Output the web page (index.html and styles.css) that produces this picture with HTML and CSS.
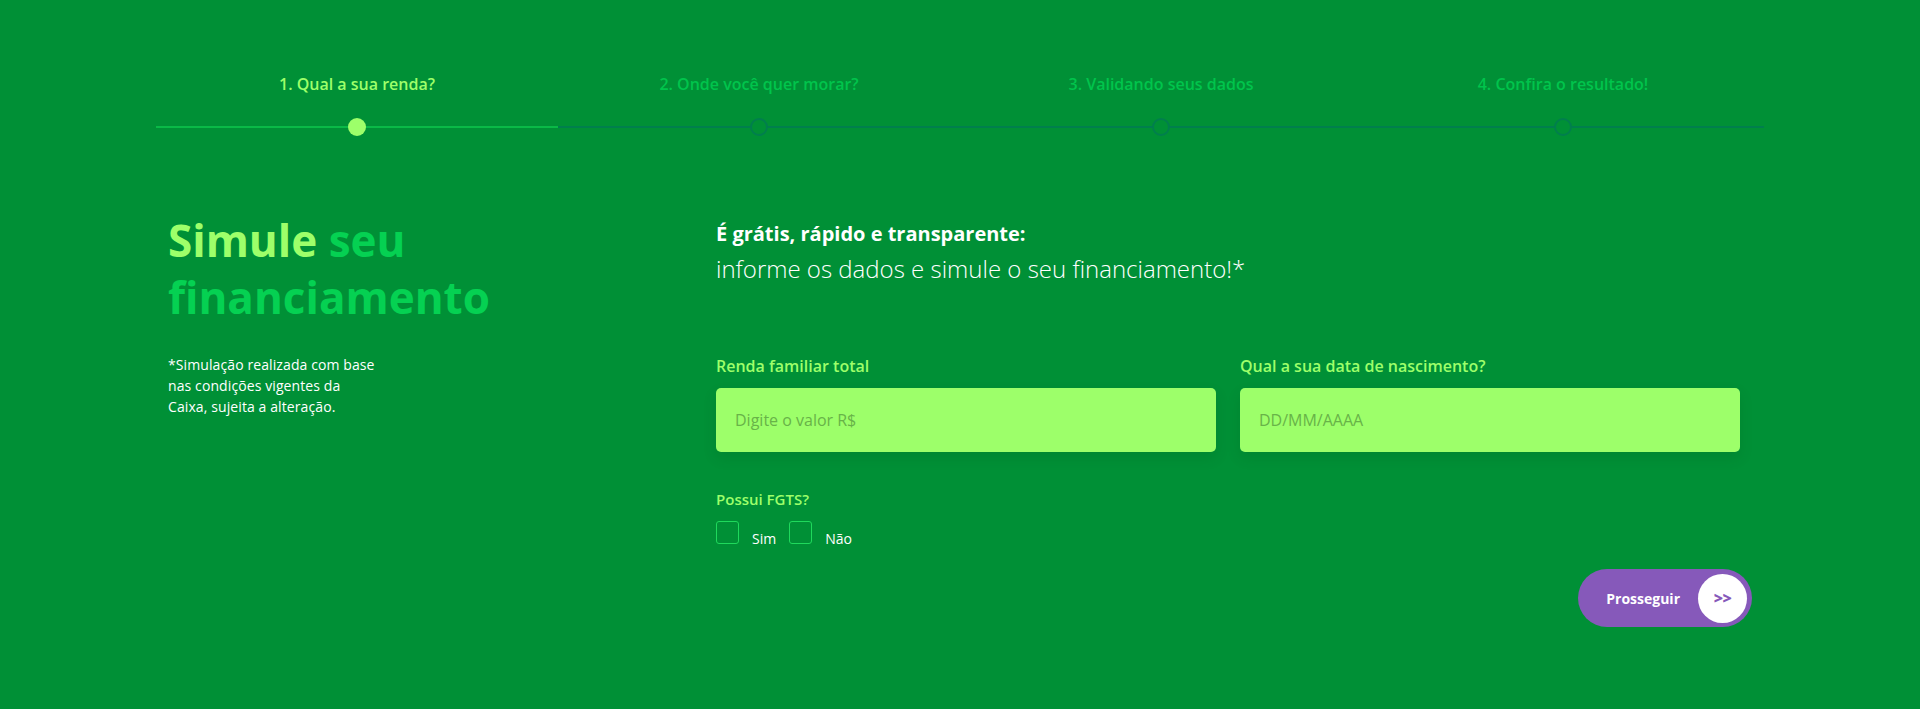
FILE: index.html
```html
<!DOCTYPE html>
<html lang="pt-BR">
<head>
    <meta charset="UTF-8">
    <meta name="viewport" content="width=device-width, initial-scale=1.0">
    <title>Simule seu financiamento</title>
    <link rel="stylesheet" href="styles.css">
</head>
<body>

    <div class="page">
        <ol class="steps">
            <li class="step active">
                <span class="step-title">1. Qual a sua renda?</span>
                <span class="step-track"><span class="step-dot"></span></span>
            </li>
            <li class="step">
                <span class="step-title">2. Onde você quer morar?</span>
                <span class="step-track"><span class="step-dot"></span></span>
            </li>
            <li class="step">
                <span class="step-title">3. Validando seus dados</span>
                <span class="step-track"><span class="step-dot"></span></span>
            </li>
            <li class="step">
                <span class="step-title">4. Confira o resultado!</span>
                <span class="step-track"><span class="step-dot"></span></span>
            </li>
        </ol>

        <main class="simulator">
            <section class="intro">
                <h1 class="title"><span class="title-hl">Simule</span> seu<br>financiamento</h1>
                <p class="note">*Simulação realizada com base<br>nas condições vigentes da<br>Caixa, sujeita a alteração.</p>
            </section>

            <form class="form" onsubmit="return false">
                <div class="lead">É grátis, rápido e transparente:</div>
                <div class="lead-sub">informe os dados e simule o seu financiamento!*</div>

                <div class="fields">
                    <label class="field">
                        <span class="field-label">Renda familiar total</span>
                        <input class="field-input" type="text" placeholder="Digite o valor R$">
                    </label>
                    <label class="field">
                        <span class="field-label">Qual a sua data de nascimento?</span>
                        <input class="field-input" type="text" placeholder="DD/MM/AAAA">
                    </label>
                </div>

                <div class="fgts">
                    <div class="fgts-label">Possui FGTS?</div>
                    <div class="fgts-options">
                        <label class="option"><input class="option-box" type="checkbox" name="fgts"><span>Sim</span></label>
                        <label class="option"><input class="option-box" type="checkbox" name="fgts"><span>Não</span></label>
                    </div>
                </div>

                <div class="actions">
                    <button class="btn-next" type="submit">Prosseguir <span class="btn-arrow">&gt;&gt;</span></button>
                </div>
            </form>
        </main>
    </div>

</body>
</html>
```

FILE: styles.css
```css
* {
    box-sizing: border-box;
}

body {
    margin: 0;
    background-color: #009036;
    font-family: "Open Sans", "Noto Sans", sans-serif;
    color: #fff;
}

.page {
    width: 1608px;
    margin: 0 auto;
    padding-top: 74px;
}

/* steps bar */
.steps {
    display: flex;
    list-style: none;
    margin: 0;
    padding: 0;
}

.step {
    flex: 1;
    display: flex;
    flex-direction: column;
    align-items: center;
    gap: 24px;
}

.step-title {
    font-size: 16px;
    line-height: 20px;
    font-weight: 600;
    color: #00c44c;
}

.step-track {
    width: 100%;
    height: 18px;
    display: flex;
    justify-content: center;
    background: linear-gradient(#007f4d, #007f4d) center / 100% 2px no-repeat;
}

.step-dot {
    width: 18px;
    height: 18px;
    border-radius: 50%;
    border: 2px solid #007f4d;
    background-color: #009036;
}

.step.active .step-title {
    color: #9dff6a;
}

.step.active .step-track {
    background-image: linear-gradient(#0ab947, #0ab947);
}

.step.active .step-dot {
    border: none;
    background-color: #9dff6a;
}

/* content */
.simulator {
    display: flex;
    margin-top: 76px;
    padding: 0 12px;
}

.intro {
    width: 548px;
}

.title {
    margin: 0;
    font-size: 44px;
    line-height: 57px;
    font-weight: 700;
    color: #05d152;
}

.title-hl {
    color: #9dff6a;
}

.note {
    margin: 28px 0 0;
    font-size: 14px;
    line-height: 21px;
    letter-spacing: 0.1px;
}

.form {
    flex: 1;
    padding-top: 8px;
}

.lead {
    font-size: 20px;
    line-height: 28px;
    font-weight: 700;
}

.lead-sub {
    margin-top: 5px;
    font-size: 24px;
    line-height: 32px;
    font-weight: 300;
}

.fields {
    display: grid;
    grid-template-columns: 500px 500px;
    gap: 24px;
    margin-top: 71px;
}

.field {
    display: flex;
    flex-direction: column;
    gap: 12px;
}

.field-label,
.fgts-label {
    font-size: 16px;
    line-height: 20px;
    font-weight: 600;
    color: #9dff6a;
}

.field-input {
    height: 64px;
    padding: 0 19px;
    border: none;
    border-radius: 5px;
    background-color: #9dff6a;
    box-shadow: 0 6px 14px rgba(0, 60, 20, 0.12);
    font-family: inherit;
    font-size: 16px;
    color: #1f5a12;
    outline: none;
}

.field-input::placeholder {
    color: #68b348;
}

.fgts {
    margin-top: 37px;
}

.fgts-label {
    font-size: 15px;
}

.fgts-options {
    display: flex;
    gap: 13px;
    margin-top: 12px;
}

.option {
    display: flex;
    align-items: flex-end;
    gap: 13px;
    font-size: 14px;
    line-height: 14px;
    cursor: pointer;
}

.option span {
    margin-bottom: -2px;
}

.option-box {
    appearance: none;
    width: 23px;
    height: 23px;
    margin: 0;
    border: 1.5px solid #1fd95c;
    border-radius: 3px;
    background: transparent;
    cursor: pointer;
}

.actions {
    display: flex;
    justify-content: flex-end;
    margin-top: 25px;
}

.btn-next {
    display: flex;
    align-items: center;
    gap: 18px;
    height: 58px;
    padding: 0 5px 0 28px;
    border: none;
    border-radius: 29px;
    background-color: #8659ba;
    font-family: inherit;
    font-size: 14px;
    font-weight: 700;
    color: #fff;
    cursor: pointer;
}

.btn-arrow {
    width: 49px;
    height: 49px;
    border-radius: 50%;
    background-color: #fff;
    display: flex;
    align-items: center;
    justify-content: center;
    color: #8659ba;
    font-size: 16px;
    font-weight: 800;
    letter-spacing: -0.5px;
}
```
